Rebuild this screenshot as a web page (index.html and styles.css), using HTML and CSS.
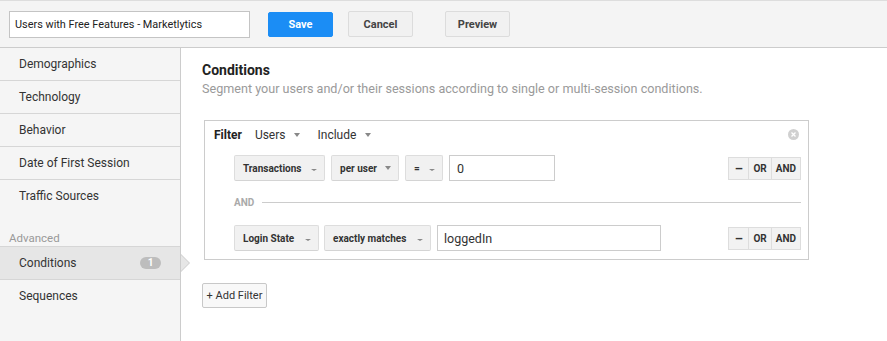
FILE: index.html
```html
<!DOCTYPE html>
<html lang="en">
<head>
    <meta charset="UTF-8">
    <title>Segment editor</title>
    <link rel="stylesheet" href="styles.css">
</head>
<body>
    <div class="topbar">
        <input class="segment-name" type="text" value="Users with Free Features - Marketlytics">
        <button class="btn btn-primary">Save</button>
        <button class="btn btn-cancel">Cancel</button>
        <button class="btn btn-preview">Preview</button>
    </div>

    <div class="layout">
        <div class="sidebar">
            <div class="nav-item">Demographics</div>
            <div class="nav-item">Technology</div>
            <div class="nav-item">Behavior</div>
            <div class="nav-item">Date of First Session</div>
            <div class="nav-item last">Traffic Sources</div>
            <div class="nav-label">Advanced</div>
            <div class="nav-item active">Conditions <span class="badge">1</span></div>
            <div class="nav-item plain">Sequences</div>
        </div>

        <div class="main">
            <h2>Conditions</h2>
            <p class="subtitle">Segment your users and/or their sessions according to single or multi-session conditions.</p>

            <div class="filter-box">
                <div class="filter-head">
                    <span class="filter-title">Filter</span>
                    <span class="select">Users <i class="caret"></i></span>
                    <span class="select">Include <i class="caret"></i></span>
                    <span class="close-icon">
                        <svg width="11" height="11" viewBox="0 0 11 11"><circle cx="5.5" cy="5.5" r="5.5" fill="#d0d0d0"/><path d="M3.5 3.5 L7.5 7.5 M7.5 3.5 L3.5 7.5" stroke="#fff" stroke-width="1.3"/></svg>
                    </span>
                </div>

                <div class="cond-row">
                    <div class="cond-fields">
                        <span class="dropdown w-transactions">Transactions <i class="caret small"></i></span>
                        <span class="dropdown w-peruser">per user <i class="caret"></i></span>
                        <span class="dropdown w-eq">= <i class="caret small"></i></span>
                        <input class="value-input w-zero" type="text" value="0">
                    </div>
                    <div class="logic-btns">
                        <span class="logic minus">&ndash;</span>
                        <span class="logic">OR</span>
                        <span class="logic">AND</span>
                    </div>
                </div>

                <div class="and-sep"><span>AND</span></div>

                <div class="cond-row">
                    <div class="cond-fields">
                        <span class="dropdown w-login">Login State <i class="caret small"></i></span>
                        <span class="dropdown w-matches">exactly matches <i class="caret small"></i></span>
                        <input class="value-input w-logged" type="text" value="loggedIn">
                    </div>
                    <div class="logic-btns">
                        <span class="logic minus">&ndash;</span>
                        <span class="logic">OR</span>
                        <span class="logic">AND</span>
                    </div>
                </div>
            </div>

            <button class="add-filter">+ Add Filter</button>
        </div>
    </div>
</body>
</html>
```

FILE: styles.css
```css
html, body {
    margin: 0;
    height: 100%;
}
body {
    font-family: Roboto, "Liberation Sans", Arial, sans-serif;
    color: #333;
    display: flex;
    flex-direction: column;
    overflow: hidden;
}
.topbar {
    display: flex;
    align-items: center;
    height: 46px;
    background-color: #f4f4f4;
    border-top: 1px solid #ddd;
    border-bottom: 1px solid #ccc;
    padding-left: 9px;
    flex-shrink: 0;
}
.segment-name {
    width: 241px;
    height: 27px;
    box-sizing: border-box;
    border: 1px solid #c4c4c4;
    padding: 0 5px;
    font-family: inherit;
    font-size: 10.9px;
    color: #222;
    background: #fff;
    outline: none;
}
.btn {
    height: 26px;
    width: 65px;
    border-radius: 2px;
    font-family: inherit;
    font-size: 11px;
    font-weight: bold;
    cursor: pointer;
    padding: 0;
}
.btn-primary {
    margin-left: 18px;
    background-color: #1b8df5;
    color: #fff;
    border: 1px solid #1b8df5;
    height: 25px;
}
.btn-cancel {
    margin-left: 15px;
    background-color: #f1f1f1;
    color: #444;
    border: 1px solid #dcdcdc;
}
.btn-preview {
    margin-left: 32px;
    background-color: #f1f1f1;
    color: #444;
    border: 1px solid #dcdcdc;
}

.layout {
    flex: 1;
    display: flex;
}
.sidebar {
    width: 180px;
    background-color: #f5f5f5;
    border-right: 1px solid #ccc;
    flex-shrink: 0;
}
.nav-item {
    height: 32px;
    line-height: 32px;
    padding-left: 19px;
    font-size: 12px;
    color: #333;
    border-bottom: 1px solid #d6d6d6;
    position: relative;
}
.nav-item.last,
.nav-item.plain {
    border-bottom: none;
}
.nav-label {
    padding: 19px 0 1px 9px;
    font-size: 11.5px;
    color: #999;
    height: 14px;
    line-height: 14px;
}
.nav-item.active {
    background-color: #e6e6e6;
    border-top: 1px solid #d6d6d6;
}
.nav-item.active::after {
    content: "";
    position: absolute;
    right: -9px;
    top: 8px;
    width: 0;
    height: 0;
    border-top: 8px solid transparent;
    border-bottom: 8px solid transparent;
    border-left: 8px solid #e6e6e6;
}
.nav-item.active::before {
    content: "";
    position: absolute;
    right: -10px;
    top: 7px;
    width: 0;
    height: 0;
    border-top: 9px solid transparent;
    border-bottom: 9px solid transparent;
    border-left: 9px solid #ccc;
}
.badge {
    position: absolute;
    left: 140px;
    top: 10px;
    width: 21px;
    height: 12px;
    line-height: 12px;
    border-radius: 6px;
    background-color: #bdbdbd;
    color: #fff;
    font-size: 10px;
    font-weight: bold;
    text-align: center;
}

.main {
    flex: 1;
    padding-left: 21px;
    background: #fff;
}
.main h2 {
    margin: 14px 0 0;
    font-size: 14px;
    font-weight: bold;
    color: #222;
    line-height: 16px;
}
.subtitle {
    margin: 3px 0 0;
    font-size: 12.6px;
    color: #9a9a9a;
    line-height: 16px;
}

.filter-box {
    margin: 23px 0 0 2px;
    width: 605px;
    box-sizing: border-box;
    border: 1px solid #ccc;
    padding: 4px 7px 8px 9px;
}
.filter-head {
    display: flex;
    align-items: center;
    height: 19px;
    font-size: 12px;
}
.filter-title {
    font-weight: bold;
    color: #222;
    margin-right: 13px;
}
.select {
    display: inline-flex;
    align-items: center;
    margin-right: 17px;
    color: #333;
}
.caret {
    display: inline-block;
    width: 0;
    height: 0;
    border-left: 3px solid transparent;
    border-right: 3px solid transparent;
    border-top: 4px solid #888;
    margin-left: 9px;
}
.caret.small {
    border-top-width: 2px;
    margin-top: 3px;
}
.close-icon {
    margin-left: auto;
    margin-right: 2px;
    display: flex;
}

.cond-row {
    display: flex;
    align-items: center;
    justify-content: space-between;
    margin-top: 11px;
    padding-left: 20px;
}
.cond-fields {
    display: flex;
    gap: 6px;
}
.dropdown {
    display: flex;
    align-items: center;
    height: 26px;
    box-sizing: border-box;
    padding: 0 7px 0 8px;
    background-color: #f1f1f1;
    border: 1px solid #ddd;
    border-bottom-color: #d4d4d4;
    border-radius: 2px;
    font-size: 10px;
    font-weight: bold;
    color: #333;
}
.dropdown .caret {
    margin-left: auto;
}
.w-transactions { width: 91px; }
.w-peruser { width: 68px; }
.w-eq { width: 38px; }
.w-login { width: 85px; }
.w-matches { width: 107px; margin-left: -1px; }
.value-input {
    height: 26px;
    box-sizing: border-box;
    border: 1px solid #ccc;
    padding: 0 7px;
    font-family: inherit;
    font-size: 12.5px;
    color: #333;
    outline: none;
}
.w-zero { width: 106px; }
.w-logged { width: 224px; padding-left: 6px; }

.logic-btns {
    display: flex;
}
.logic {
    height: 23px;
    line-height: 21px;
    box-sizing: border-box;
    padding: 0 4px;
    min-width: 21px;
    text-align: center;
    background-color: #f2f2f2;
    border: 1px solid #ddd;
    margin-left: -1px;
    font-size: 10px;
    font-weight: bold;
    color: #333;
}
.logic.minus {
    font-size: 13px;
}

.and-sep {
    display: flex;
    align-items: center;
    margin: 14px 0 0 20px;
    height: 14px;
}
.and-sep span {
    font-size: 10px;
    font-weight: bold;
    color: #aaa;
    margin-right: 8px;
}
.and-sep::after {
    content: "";
    flex: 1;
    border-top: 1px solid #ccc;
}
.and-sep + .cond-row {
    margin-top: 16px;
}

.add-filter {
    margin-top: 23px;
    height: 25px;
    width: 65px;
    padding: 0;
    background-color: #f8f8f8;
    border: 1px solid #c8c8c8;
    border-radius: 2px;
    font-family: inherit;
    font-size: 11px;
    color: #333;
    cursor: pointer;
}
```
